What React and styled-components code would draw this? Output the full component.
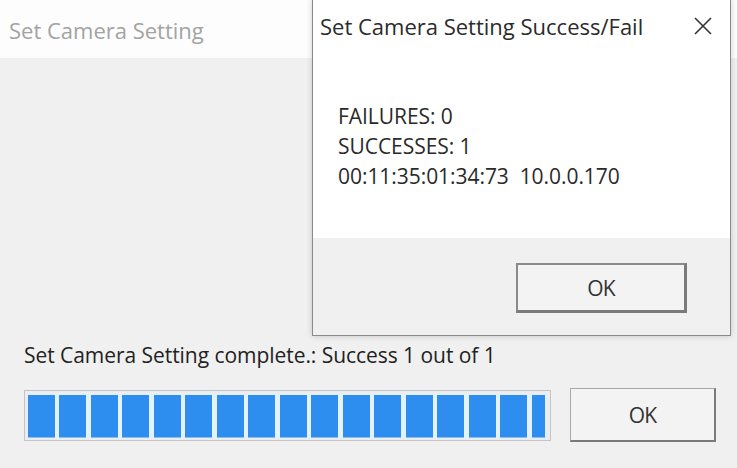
import React from "react";
import styled, { createGlobalStyle } from "styled-components";

const Global = createGlobalStyle`
  html, body { margin: 0; padding: 0; background: #f0f0f0; }
  body { font-family: "Open Sans", "Noto Sans", "Liberation Sans", sans-serif; }
  #root { width: 737px; height: 468px; overflow: hidden; position: relative; }
`;

const Window = styled.div`
  width: 737px;
  height: 468px;
  display: flex;
  flex-direction: column;
  background: #f0f0f0;
  position: relative;
`;

const TitleBar = styled.div`
  height: 58px;
  flex: none;
  background: #fdfdfd;
  display: flex;
  align-items: center;
  padding-left: 9px;
  padding-top: 2px;
  box-sizing: border-box;
`;

const TitleText = styled.div`
  font-size: ${(p) => p.$size || 17}px;
  color: ${(p) => p.$color || "#333"};
  letter-spacing: ${(p) => p.$ls || 0}px;
  white-space: nowrap;
`;

const Content = styled.div`
  flex: 1;
  display: flex;
  flex-direction: column;
  padding: 284px 20px 0 24px;
`;

const Label = styled.div`
  font-size: 21px;
  color: #222;
  line-height: 26px;
  letter-spacing: -0.05px;
  white-space: nowrap;
`;

const ProgressRow = styled.div`
  display: flex;
  align-items: center;
  gap: 19px;
  margin-top: 20px;
`;

const Progress = styled.div`
  width: 527px;
  height: 51px;
  box-sizing: border-box;
  border: 1px solid #c4c4c4;
  background: #e8eef4;
  padding: 4px 3px 2px 3px;
  display: flex;
`;

const Fill = styled.div`
  flex: 1;
  background: repeating-linear-gradient(
    90deg,
    #2e8ef0 0px,
    #2e8ef0 27px,
    #e4f2fc 27px,
    #e4f2fc 31.5px
  );
  clip-path: inset(0 2px 0 0);
`;

const Button = styled.button`
  width: ${(p) => p.$w}px;
  height: ${(p) => p.$h}px;
  box-sizing: border-box;
  background: #f3f3f3;
  border: 1px solid #a8a8a8;
  border-right: 2px solid #7a7a7a;
  border-bottom: 2px solid #7a7a7a;
  font-family: inherit;
  font-size: 21px;
  color: #333;
  letter-spacing: -0.8px;
  padding: 0;
  ${(p) =>
    p.$default &&
    `border: 2px solid #7a7a7a; border-top-color: #8a8a8a; border-left-color: #8a8a8a; border-right-width: 3px; border-bottom-width: 3px;`}
`;

const Dialog = styled.div`
  position: absolute;
  left: 312px;
  top: -2px;
  width: 419px;
  height: 338px;
  box-sizing: border-box;
  border: 1px solid #8a8a8a;
  background: #ffffff;
  display: flex;
  flex-direction: column;
  box-shadow: 0 0 6px rgba(0, 0, 0, 0.18);
`;

const DialogTitle = styled.div`
  height: 60px;
  flex: none;
  display: flex;
  align-items: center;
  justify-content: space-between;
  padding: 0 17px 6px 7px;
  box-sizing: border-box;
`;

const DialogBody = styled.div`
  flex: 1;
  padding: 42px 0 0 25px;
  background: #fff;
`;

const Line = styled.div`
  font-size: 21px;
  line-height: 30px;
  color: #2a2a2a;
  letter-spacing: -0.05px;
  white-space: pre;
`;

const DialogFooter = styled.div`
  height: 97px;
  flex: none;
  background: #f0f0f0;
  display: flex;
  justify-content: flex-end;
  align-items: flex-start;
  padding: 25px 43px 0 0;
  box-sizing: border-box;
`;

const CloseIcon = () => (
  <svg width="20" height="20" viewBox="0 0 20 20">
    <path d="M2 2 L18 18 M18 2 L2 18" stroke="#333" strokeWidth="1.6" fill="none" />
  </svg>
);

export default function App() {
  return (
    <>
      <Global />
      <Window>
        <TitleBar>
          <TitleText $size={22} $color="#a3a3a3" $ls={0}>
            Set Camera Setting
          </TitleText>
        </TitleBar>
        <Content>
          <Label>Set Camera Setting complete.: Success 1 out of 1</Label>
          <ProgressRow>
            <Progress>
              <Fill />
            </Progress>
            <Button $w={146} $h={54}>OK</Button>
          </ProgressRow>
        </Content>
        <Dialog>
          <DialogTitle>
            <TitleText $size={22} $color="#2b2b2b" $ls={0}>
              Set Camera Setting Success/Fail
            </TitleText>
            <CloseIcon />
          </DialogTitle>
          <DialogBody>
            <Line>FAILURES: 0</Line>
            <Line>SUCCESSES: 1</Line>
            <Line>{"00:11:35:01:34:73  10.0.0.170"}</Line>
          </DialogBody>
          <DialogFooter>
            <Button $w={171} $h={50} $default>OK</Button>
          </DialogFooter>
        </Dialog>
      </Window>
    </>
  );
}
